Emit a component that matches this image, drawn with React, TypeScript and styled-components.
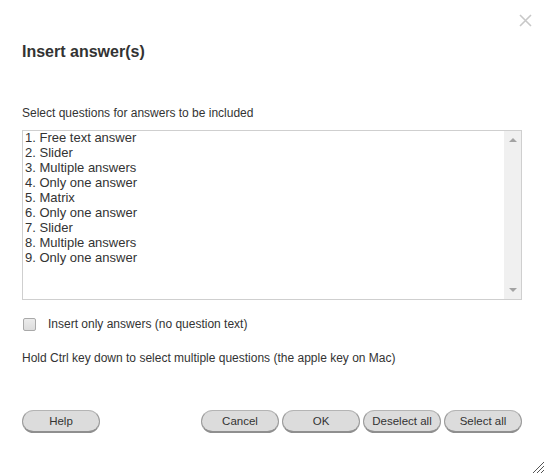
import React from 'react'
import styled, { createGlobalStyle } from 'styled-components'

const GlobalStyle = createGlobalStyle`
  html, body {
    margin: 0;
    padding: 0;
    background: #fff;
  }
  body {
    font-family: 'Liberation Sans', Arial, sans-serif;
    color: #333;
  }
`

const Dialog = styled.div`
  position: relative;
  width: 546px;
  height: 475px;
  box-sizing: border-box;
  padding: 42px 24px 0 22px;
  display: flex;
  flex-direction: column;
  background: #fff;
`

const Close = styled.button`
  position: absolute;
  top: 13px;
  right: 13px;
  width: 15px;
  height: 15px;
  padding: 0;
  border: 0;
  background: transparent;
  cursor: pointer;
  display: flex;
`

const Title = styled.h1`
  margin: 0;
  font-size: 16px;
  line-height: 19px;
  font-weight: bold;
  color: #333;
`

const Label = styled.div`
  margin-top: 45px;
  font-size: 12px;
  line-height: 15px;
  color: #333;
`

const ListBox = styled.div`
  margin-top: 9px;
  height: 170px;
  box-sizing: border-box;
  border: 1px solid #cfcfcf;
  display: flex;
`

const Options = styled.ul`
  flex: 1;
  margin: -1px 0 0;
  padding: 0 0 0 2px;
  list-style: none;
`

const Option = styled.li`
  font-size: 13px;
  line-height: 15px;
  color: #333;
  white-space: nowrap;
`

const ScrollTrack = styled.div`
  width: 17px;
  background: #f0f0f0;
  display: flex;
  flex-direction: column;
  justify-content: space-between;
  align-items: center;
  padding: 7px 0 7px;
`

const Arrow = styled.div<{ $down?: boolean }>`
  width: 0;
  height: 0;
  border-left: 4px solid transparent;
  border-right: 4px solid transparent;
  ${({ $down }) =>
    $down ? 'border-top: 4px solid #a3a3a3;' : 'border-bottom: 4px solid #a3a3a3;'}
`

const CheckRow = styled.label`
  margin-top: 17px;
  display: flex;
  align-items: center;
  gap: 12px;
  font-size: 12px;
  line-height: 15px;
  color: #333;
  padding-left: 1px;
`

const Box = styled.span`
  width: 11px;
  height: 11px;
  border: 1px solid #a9a9a9;
  border-radius: 2px;
  background: linear-gradient(#ececec, #dcdcdc);
`

const Hint = styled.div`
  margin-top: 19px;
  font-size: 12px;
  line-height: 15px;
  color: #333;
`

const Footer = styled.div`
  margin-top: 44px;
  display: flex;
  align-items: center;
  gap: 3px;
`

const Spacer = styled.div`
  flex: 1;
`

const Button = styled.button`
  width: 78px;
  height: 23px;
  box-sizing: border-box;
  padding: 0 0 1px;
  border: 1px solid #b4b4b4;
  border-bottom: 2px solid #8f8f8f;
  border-right-color: #9a9a9a;
  border-left-color: #9a9a9a;
  border-radius: 12px;
  background: #dcdcdc;
  font-family: 'Liberation Sans', Arial, sans-serif;
  font-size: 11.5px;
  color: #333;
  cursor: pointer;
`

const Grip = styled.svg`
  position: absolute;
  right: 1px;
  bottom: 1px;
`

const questions = [
  'Free text answer',
  'Slider',
  'Multiple answers',
  'Only one answer',
  'Matrix',
  'Only one answer',
  'Slider',
  'Multiple answers',
  'Only one answer',
]

const App = () => {
  return (
    <>
      <GlobalStyle />
      <Dialog>
        <Close type='button' aria-label='Close'>
          <svg width='15' height='15' viewBox='0 0 15 15'>
            <path d='M2 2 L13 13 M13 2 L2 13' stroke='#c8c8c8' strokeWidth='1.6' />
          </svg>
        </Close>
        <Title>Insert answer(s)</Title>
        <Label>Select questions for answers to be included</Label>
        <ListBox>
          <Options>
            {questions.map((q, i) => (
              <Option key={i}>{i + 1}. {q}</Option>
            ))}
          </Options>
          <ScrollTrack>
            <Arrow />
            <Arrow $down />
          </ScrollTrack>
        </ListBox>
        <CheckRow>
          <Box />
          Insert only answers (no question text)
        </CheckRow>
        <Hint>Hold Ctrl key down to select multiple questions (the apple key on Mac)</Hint>
        <Footer>
          <Button type='button'>Help</Button>
          <Spacer />
          <Button type='button'>Cancel</Button>
          <Button type='button'>OK</Button>
          <Button type='button'>Deselect all</Button>
          <Button type='button'>Select all</Button>
        </Footer>
        <Grip width='13' height='13' viewBox='0 0 13 13'>
          <path d='M12 1 L1 12 M12 5 L5 12 M12 9 L9 12' stroke='#555' strokeWidth='1' />
        </Grip>
      </Dialog>
    </>
  )
}

export default App
